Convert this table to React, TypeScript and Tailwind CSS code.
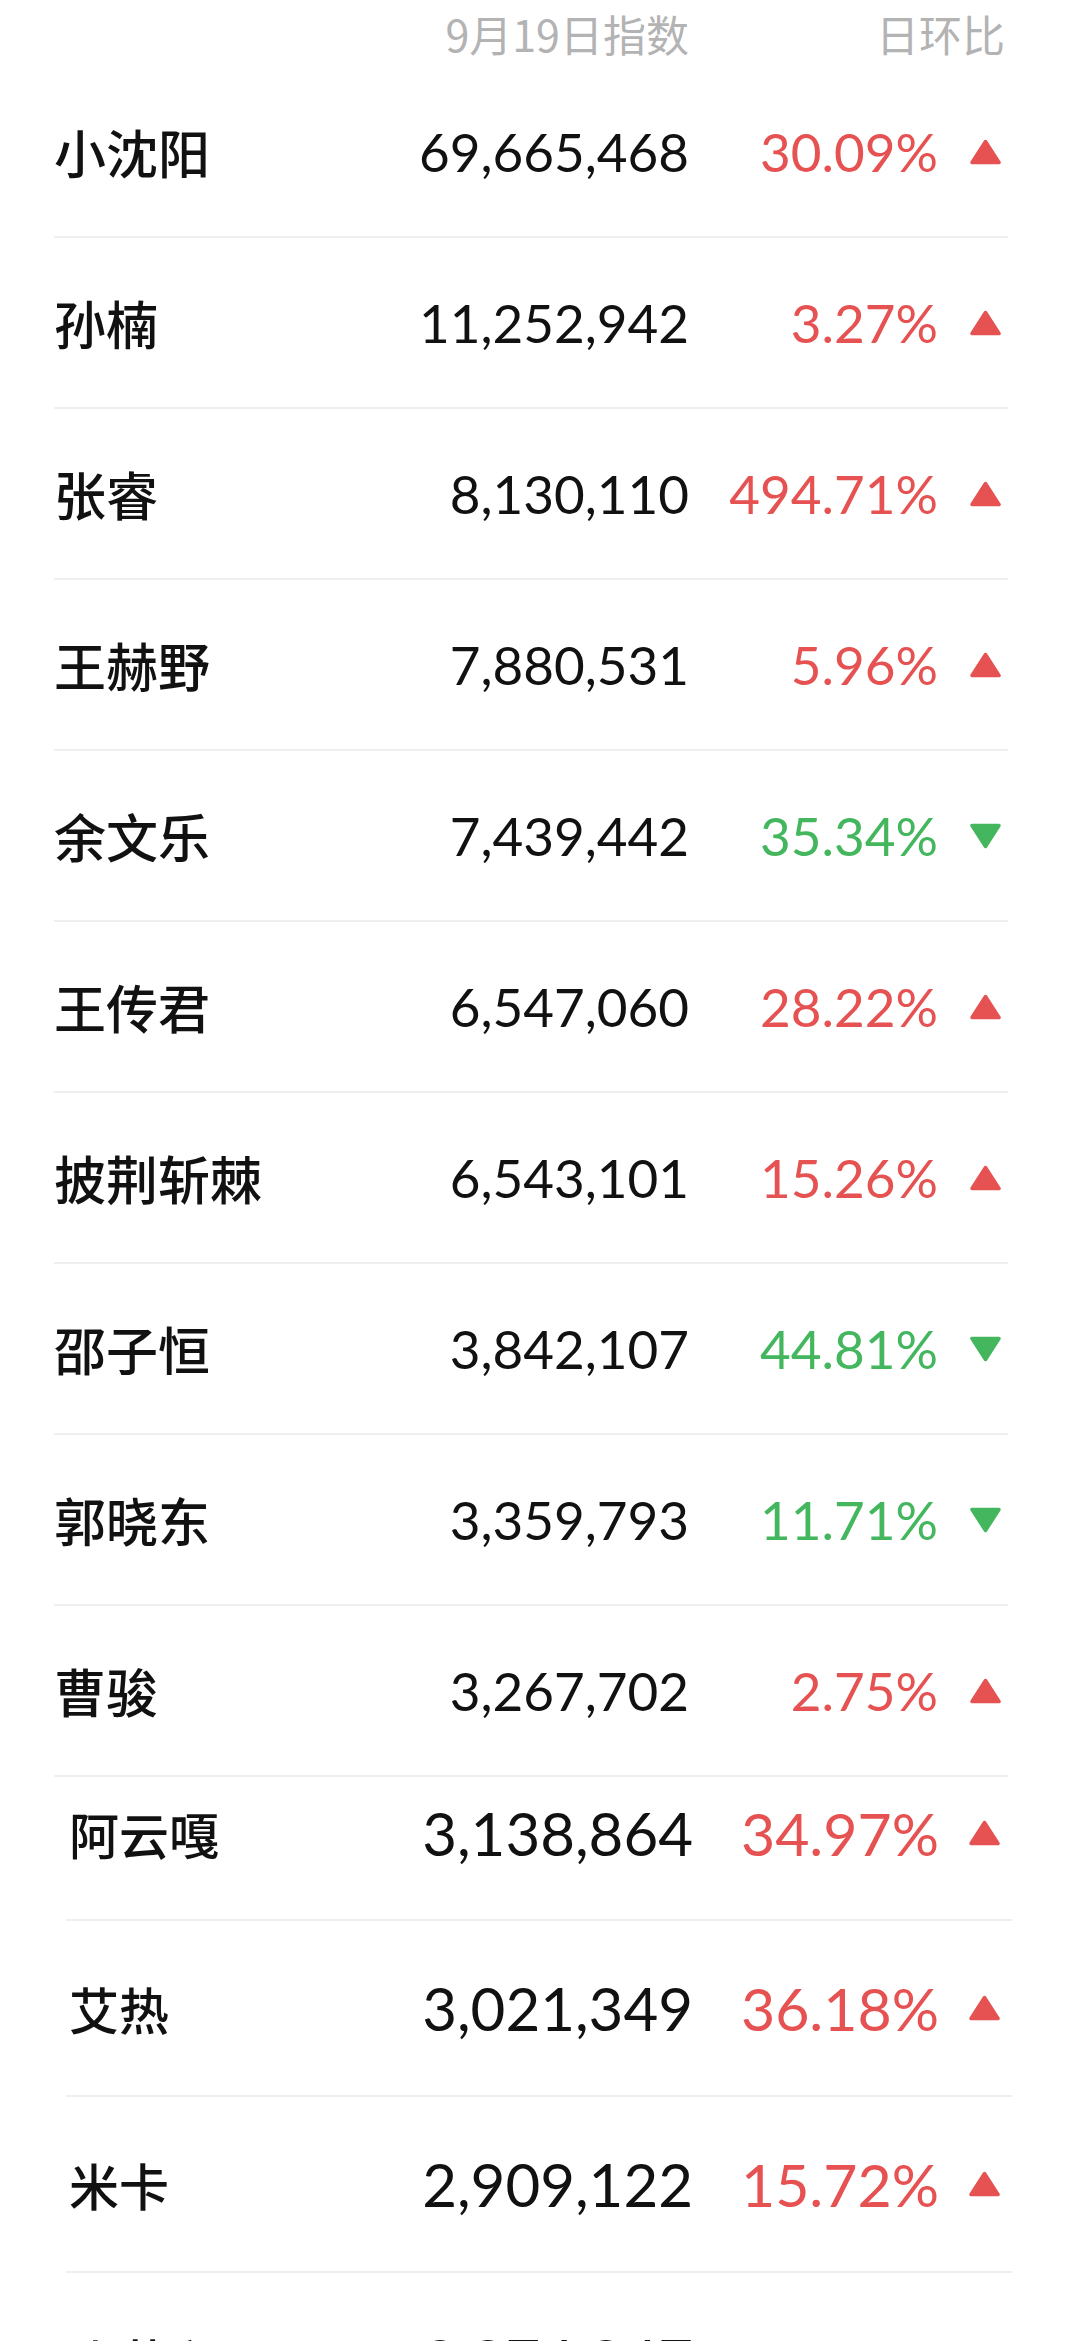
import React from "react";

type Item = { name: string; value: string; pct: string; up: boolean };

const TOP: Item[] = [
  { name: "小沈阳", value: "69,665,468", pct: "30.09%", up: true },
  { name: "孙楠", value: "11,252,942", pct: "3.27%", up: true },
  { name: "张睿", value: "8,130,110", pct: "494.71%", up: true },
  { name: "王赫野", value: "7,880,531", pct: "5.96%", up: true },
  { name: "余文乐", value: "7,439,442", pct: "35.34%", up: false },
  { name: "王传君", value: "6,547,060", pct: "28.22%", up: true },
  { name: "披荆斩棘", value: "6,543,101", pct: "15.26%", up: true },
  { name: "邵子恒", value: "3,842,107", pct: "44.81%", up: false },
  { name: "郭晓东", value: "3,359,793", pct: "11.71%", up: false },
  { name: "曹骏", value: "3,267,702", pct: "2.75%", up: true },
];

const BOTTOM: Item[] = [
  { name: "阿云嘎", value: "3,138,864", pct: "34.97%", up: true },
  { name: "艾热", value: "3,021,349", pct: "36.18%", up: true },
  { name: "米卡", value: "2,909,122", pct: "15.72%", up: true },
  { name: "张艺兴", value: "2,874,847", pct: "11.81%", up: true },
];

const CJK = "font-['Noto_Sans_CJK_SC',sans-serif]";
const NUM = "font-['Lato','Noto_Sans_CJK_SC',sans-serif]";

function Arrow({ up }: { up: boolean }) {
  const color = up ? "#e65151" : "#43b65e";
  return (
    <svg viewBox="0 0 31 26" className="w-[31px] h-[26px]">
      <polygon
        points={up ? "15.5,2.5 29,23.5 2,23.5" : "2,2.5 29,2.5 15.5,23.5"}
        fill={color}
        stroke={color}
        strokeWidth={3.5}
        strokeLinejoin="round"
      />
    </svg>
  );
}

function Row({ item, big, className }: { item: Item; big?: boolean; className: string }) {
  return (
    <div className="border-b-2 border-[#efefef]">
      <div className={`flex items-center ${className}`}>
        <div
          className={`flex-1 text-[#111] leading-none font-medium ${CJK} ${
            big ? "text-[50px] pl-[3px]" : "text-[52px]"
          }`}
        >
          {item.name}
        </div>
        <div className={`${NUM} text-[#111] leading-none text-right ${big ? "text-[60px]" : "text-[53px]"}`}>
          {item.value}
        </div>
        <div
          className={`${NUM} leading-none text-right ${big ? "text-[59px] w-[246px]" : "text-[53px] w-[249px]"} ${
            item.up ? "text-[#e65151]" : "text-[#43b65e]"
          }`}
        >
          {item.pct}
        </div>
        <div className={`flex ${big ? "ml-[30px] mr-[12px]" : "ml-[32px] mr-[7px]"}`}>
          <Arrow up={item.up} />
        </div>
      </div>
    </div>
  );
}

export default function App() {
  return (
    <div className="w-[1080px] h-[2341px] overflow-hidden bg-white">
      {/* 表头 */}
      <div className={`h-[67px] mx-[54px] w-[954px] flex items-center text-[43px] text-[#b3b3b3] leading-none ${CJK}`}>
        <div className="flex-1" />
        <div className="text-right">9月19日指数</div>
        <div className="w-[319px] text-right pr-[3px]">日环比</div>
      </div>

      <div className="mx-[54px] w-[954px]">
        {TOP.map((it) => (
          <Row key={it.name} item={it} className="h-[169px]" />
        ))}
      </div>

      {/* 第二张截图 */}
      <div className="ml-[66px] w-[946px]">
        {BOTTOM.map((it, i) => (
          <Row key={it.name} item={it} big className={i === 0 ? "h-[142px] pb-[30px]" : "h-[174px]"} />
        ))}
      </div>
    </div>
  );
}
